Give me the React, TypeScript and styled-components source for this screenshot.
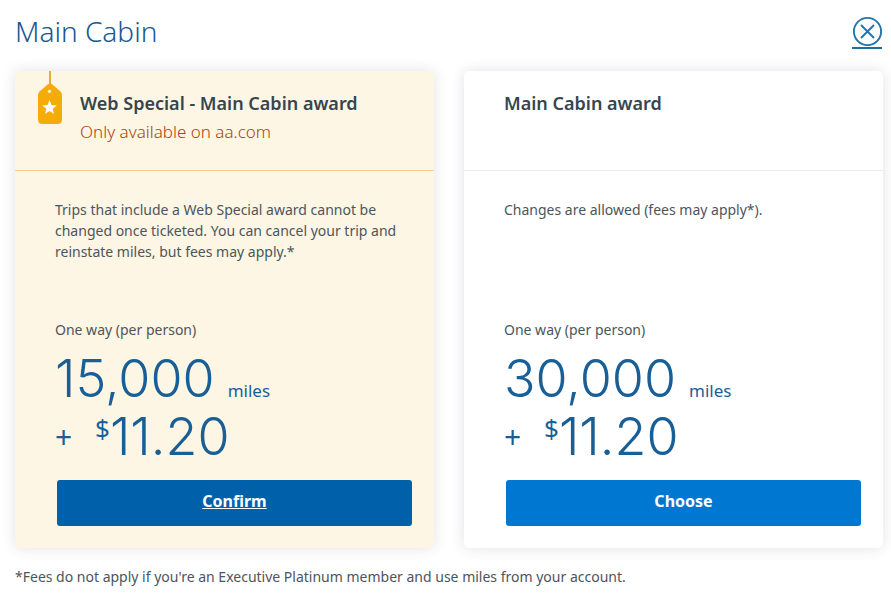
import React from "react";
import styled, { createGlobalStyle } from "styled-components";

const GlobalStyle = createGlobalStyle`
  *, *::before, *::after { box-sizing: border-box; }
  body {
    margin: 0;
    background: #fff;
    color: #4c555c;
    font-family: "Noto Sans", "Open Sans", sans-serif;
    font-size: 14px;
    line-height: 21px;
  }
  h1, h2, p { margin: 0; }
`;

const Page = styled.main`
  padding: 14px 8px 12px 15px;
`;

const TitleBar = styled.header`
  display: flex;
  justify-content: space-between;
  align-items: flex-start;
  height: 57px;
`;

const Title = styled.h1`
  color: #17598f;
  font-size: 28px;
  font-weight: 300;
  line-height: 34px;
`;

const CloseButton = styled.button`
  display: flex;
  justify-content: center;
  width: 30px;
  height: 34px;
  margin: 1px 1px 0 0;
  padding: 1px 0 0;
  border: 0;
  border-bottom: 2px solid #1f6f98;
  background: none;
  cursor: pointer;
`;

const Cards = styled.div`
  display: grid;
  grid-template-columns: 1fr 1fr;
  gap: 30px;
`;

const Card = styled.section<{ $special?: boolean }>`
  display: flex;
  flex-direction: column;
  border-radius: 5px;
  background: ${(p) => (p.$special ? "#fdf6e4" : "#fff")};
  box-shadow: 0 0 14px rgba(40, 50, 80, 0.14);
`;

const CardHeader = styled.div<{ $special?: boolean }>`
  display: flex;
  align-items: flex-start;
  gap: 17px;
  height: 100px;
  padding: 0 ${(p) => (p.$special ? "22px" : "40px")};
  border-bottom: 1px solid ${(p) => (p.$special ? "#f5cf8b" : "#e9ecef")};
`;

const Headings = styled.div`
  padding-top: 18px;
`;

const CardTitle = styled.h2`
  color: #36454f;
  font-size: 18px;
  font-weight: 600;
  line-height: 28px;
`;

const Availability = styled.p`
  color: #ad420f;
  font-size: 17px;
  font-weight: 300;
  line-height: 30px;
`;

const CardBody = styled.div`
  display: flex;
  flex: 1;
  flex-direction: column;
  padding: 28px 22px 22px 40px;
`;

const Terms = styled.p`
  min-height: 120px;
`;

const Price = styled.div`
  margin-top: 10px;
  color: #185f98;
`;

const Amount = styled.p`
  display: flex;
  align-items: baseline;
  height: 58px;
  line-height: 58px;
`;

const Digits = styled.span`
  font-family: Inter, "Noto Sans", sans-serif;
  font-size: 52px;
  font-weight: 300;
`;

const Unit = styled.span`
  margin-left: 13px;
  font-size: 17px;
`;

const Plus = styled.span`
  align-self: center;
  width: 40px;
  font-size: 30px;
`;

const Currency = styled.span`
  align-self: flex-start;
  font-size: 26px;
  line-height: 40px;
`;

const SelectButton = styled.button<{ $active?: boolean }>`
  height: 46px;
  margin: 14px 0 0 2px;
  padding: 0 0 4px;
  border: 0;
  border-radius: 3px;
  background: ${(p) => (p.$active ? "#0061ab" : "#0078d2")};
  color: #fff;
  font: 700 16px/24px "Noto Sans", "Open Sans", sans-serif;
  text-decoration: ${(p) => (p.$active ? "underline" : "none")};
  cursor: pointer;
`;

const Footnote = styled.p`
  margin-top: 18px;
`;

const CloseIcon = () => (
  <svg width="30" height="30" viewBox="0 0 30 30" fill="none" stroke="#2274ad" aria-hidden="true">
    <circle cx="15.5" cy="15.5" r="13.6" strokeWidth="1.9" />
    <path d="M9 9 22 22M22 9 9 22" strokeWidth="1.9" />
  </svg>
);

const TagIcon = () => (
  <svg width="26" height="54" viewBox="0 0 26 54" aria-hidden="true">
    <path d="M13 0V14" stroke="#e3ae3c" strokeWidth="2" />
    <path
      d="M10.6 13.6Q13 11.4 15.4 13.6L23.2 20.2Q25 21.8 25 24.2V48.5Q25 53 20.5 53H5.5Q1 53 1 48.5V24.2Q1 21.8 2.8 20.2Z"
      fill="#f6ac08"
    />
    <circle cx="12.5" cy="20.3" r="1.6" fill="#fff8e4" />
    <path
      d="M12.5 29 14.5 34 19.8 34.4 15.7 37.8 17 43 12.5 40.1 8 43 9.3 37.8 5.2 34.4 10.5 34Z"
      fill="#fffdf5"
    />
  </svg>
);

interface Fare {
  name: string;
  note?: string;
  terms: string;
  miles: string;
  fee: string;
  action: string;
  special?: boolean;
}

const fares: Fare[] = [
  {
    name: "Web Special - Main Cabin award",
    note: "Only available on aa.com",
    terms:
      "Trips that include a Web Special award cannot be changed once ticketed. You can cancel your trip and reinstate miles, but fees may apply.*",
    miles: "15,000",
    fee: "11.20",
    action: "Confirm",
    special: true,
  },
  {
    name: "Main Cabin award",
    terms: "Changes are allowed (fees may apply*).",
    miles: "30,000",
    fee: "11.20",
    action: "Choose",
  },
];

const FareCard = ({ fare }: { fare: Fare }) => (
  <Card $special={fare.special}>
    <CardHeader $special={fare.special}>
      {fare.special && <TagIcon />}
      <Headings>
        <CardTitle>{fare.name}</CardTitle>
        {fare.note && <Availability>{fare.note}</Availability>}
      </Headings>
    </CardHeader>
    <CardBody>
      <Terms>{fare.terms}</Terms>
      <p>One way (per person)</p>
      <Price>
        <Amount>
          <Digits>{fare.miles}</Digits>
          <Unit>miles</Unit>
        </Amount>
        <Amount>
          <Plus>+</Plus>
          <Currency>$</Currency>
          <Digits>{fare.fee}</Digits>
        </Amount>
      </Price>
      <SelectButton type="button" $active={fare.special}>
        {fare.action}
      </SelectButton>
    </CardBody>
  </Card>
);

export default function App() {
  return (
    <>
      <GlobalStyle />
      <Page>
        <TitleBar>
          <Title>Main Cabin</Title>
          <CloseButton type="button" aria-label="Close">
            <CloseIcon />
          </CloseButton>
        </TitleBar>
        <Cards>
          {fares.map((fare) => (
            <FareCard key={fare.name} fare={fare} />
          ))}
        </Cards>
        <Footnote>
          *Fees do not apply if you're an Executive Platinum member and use miles from your account.
        </Footnote>
      </Page>
    </>
  );
}
